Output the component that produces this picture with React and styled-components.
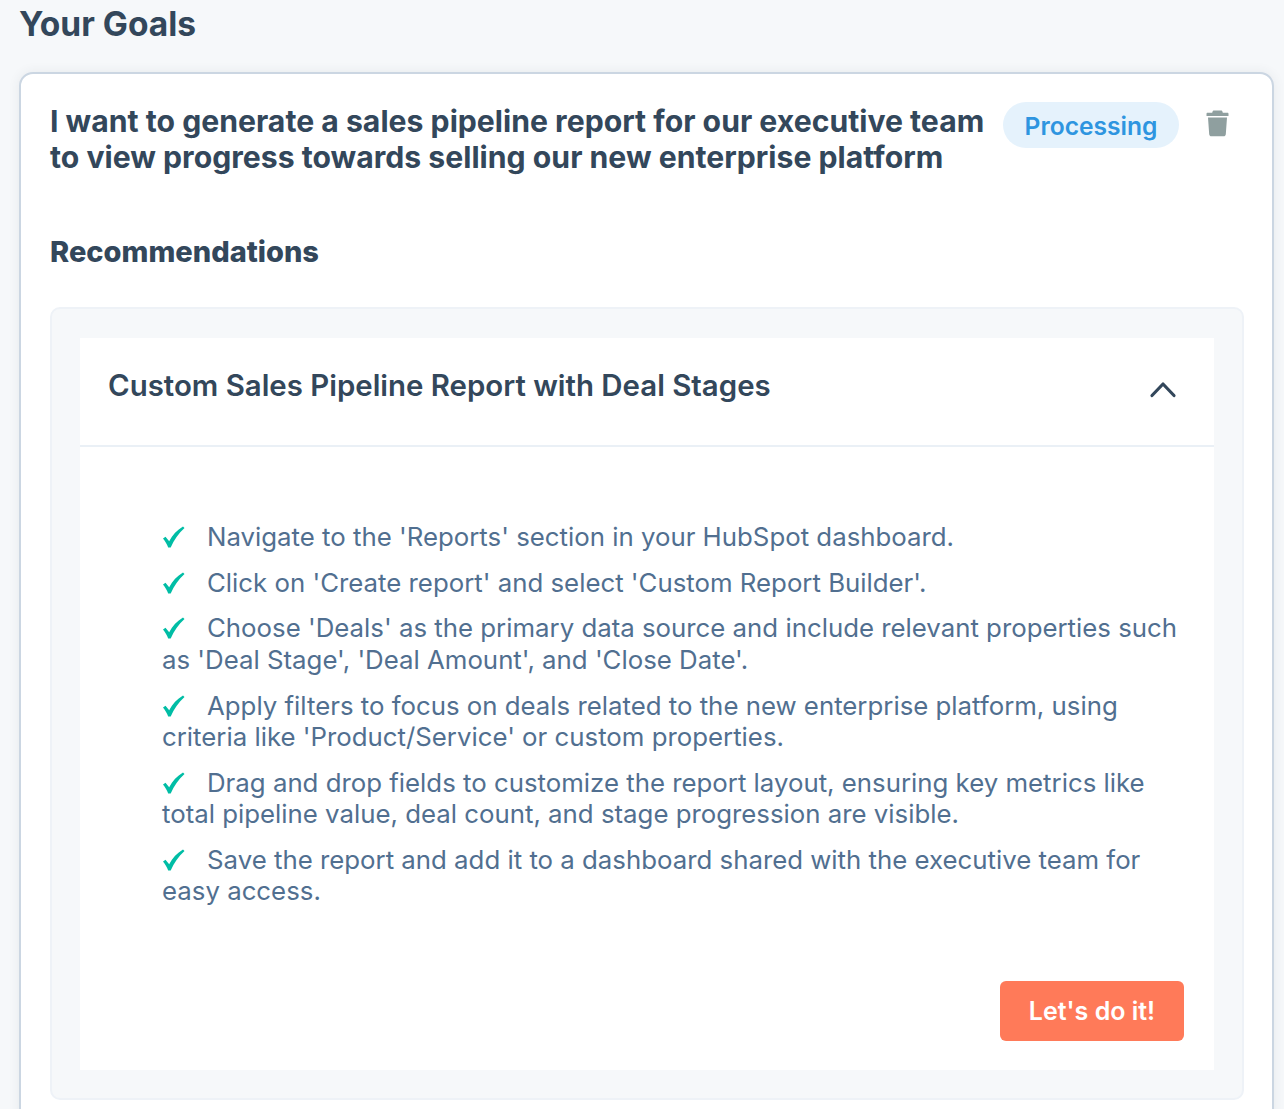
import React from 'react';
import styled, { createGlobalStyle } from 'styled-components';

const steps = [
  "Navigate to the 'Reports' section in your HubSpot dashboard.",
  "Click on 'Create report' and select 'Custom Report Builder'.",
  "Choose 'Deals' as the primary data source and include relevant properties such as 'Deal Stage', 'Deal Amount', and 'Close Date'.",
  "Apply filters to focus on deals related to the new enterprise platform, using criteria like 'Product/Service' or custom properties.",
  "Drag and drop fields to customize the report layout, ensuring key metrics like total pipeline value, deal count, and stage progression are visible.",
  "Save the report and add it to a dashboard shared with the executive team for easy access.",
];

const App = () => {
  return (
    <Page>
      <GlobalStyle />
      <Title>Your Goals</Title>
      <GoalCard>
        <GoalHeader>
          <GoalText>
            I want to generate a sales pipeline report for our executive team to view progress towards selling our new enterprise platform
          </GoalText>
          <Badge>Processing</Badge>
          <TrashButton aria-label="Delete goal">
            <svg width="23" height="28" viewBox="0 0 23 28">
              <path
                fill="#8f9f9f"
                d="M8 1.500h7c.8 0 1.300.5 1.500 1.200l.3 1h4.700c.6 0 1 .5 1 1V7H.5V4.700c0-.5.4-1 1-1h4.700l.3-1C6.700 2 7.200 1.500 8 1.500zM2 8.500h19l-1.200 16.700c-.1 1.200-1 2.100-2.200 2.100H5.400c-1.200 0-2.100-.9-2.200-2.100L2 8.500z"
              />
            </svg>
          </TrashButton>
        </GoalHeader>
        <SectionTitle>Recommendations</SectionTitle>
        <Panel>
          <Accordion>
            <AccordionHeader>
              <AccordionTitle>Custom Sales Pipeline Report with Deal Stages</AccordionTitle>
              <Chevron width="28" height="18" viewBox="0 0 28 18">
                <path d="M3 15.500L14 4l11 11.500" fill="none" stroke="#33475b" strokeWidth="3.200" strokeLinecap="round" strokeLinejoin="round" />
              </Chevron>
            </AccordionHeader>
            <AccordionBody>
              <StepList>
                {steps.map(step => (
                  <Step key={step}>
                    <Check width="23" height="24" viewBox="0 0 23 24">
                      <path fill="#00bda5" d="M1 13.500l2.500-1.800 3.700 4.500C10.500 10 15 5 21 1.500l1.500 1.500C16.500 8.500 12 15 8.700 22.500H6.200C5 19 3 16 1 13.500z" />
                    </Check>
                    {step}
                  </Step>
                ))}
              </StepList>
              <Actions>
                <PrimaryButton>Let's do it!</PrimaryButton>
              </Actions>
            </AccordionBody>
          </Accordion>
        </Panel>
      </GoalCard>
    </Page>
  );
};

export default App;

const GlobalStyle = createGlobalStyle`
  html, body {
    margin: 0;
    height: 1109px;
    overflow: hidden;
    background: #f6f8fa;
  }
  body {
    font-family: Inter, "Noto Sans", sans-serif;
  }
`;

const Page = styled.div`
  height: 1109px;
  overflow: hidden;
  box-sizing: border-box;
  padding: 0 10px 0 19px;
`;

const Title = styled.h1`
  margin: 0 0 30px;
  height: 42px;
  font-size: 33.500px;
  line-height: 48px;
  font-weight: 700;
  color: #33475b;
`;

const GoalCard = styled.section`
  box-sizing: border-box;
  background: #fff;
  border: 2px solid #cbd6e2;
  border-radius: 14px;
  padding: 28px 28px 40px 29px;
  box-shadow: 0 0 12px rgba(45, 62, 80, 0.08);
`;

const GoalHeader = styled.div`
  display: flex;
  align-items: flex-start;
`;

const GoalText = styled.div`
  width: 953px;
  padding-top: 1px;
  font-size: 30.200px;
  line-height: 36px;
  font-weight: 700;
  color: #33475b;
`;

const Badge = styled.span`
  box-sizing: border-box;
  width: 176px;
  height: 46px;
  border-radius: 23px;
  background: #e5f2fc;
  color: #2e95e0;
  font-size: 24.600px;
  font-weight: 600;
  line-height: 48px;
  text-align: center;
`;

const TrashButton = styled.button`
  margin: 7px 0 0 27px;
  padding: 0;
  border: 0;
  background: none;
  height: 28px;
`;

const SectionTitle = styled.h2`
  margin: 59px 0 37px;
  font-size: 29px;
  line-height: 36px;
  font-weight: 800;
  color: #33475b;
`;

const Panel = styled.div`
  box-sizing: border-box;
  width: 1194px;
  height: 793px;
  padding: 29px 28px 28px;
  background: #f6f8fa;
  border: 2px solid #eef2f7;
  border-radius: 10px;
`;

const Accordion = styled.div`
  width: 1134px;
  height: 732px;
  background: #fff;
`;

const AccordionHeader = styled.div`
  box-sizing: border-box;
  height: 109px;
  display: flex;
  align-items: center;
  justify-content: space-between;
  padding: 0 37px 0 28px;
  border-bottom: 2px solid #eaf0f6;
`;

const AccordionTitle = styled.div`
  font-size: 29.400px;
  line-height: 40px;
  font-weight: 600;
  color: #33475b;
  position: relative;
  top: -6px;
`;

const Chevron = styled.svg`
  margin-bottom: 5px;
`;

const AccordionBody = styled.div`
  padding: 74px 30px 0 82px;
`;

const StepList = styled.ul`
  list-style: none;
  margin: 0;
  padding: 0;
`;

const Step = styled.li`
  font-size: 25.800px;
  line-height: 31.500px;
  color: #516f90;
  margin-bottom: 14.200px;
`;

const Check = styled.svg`
  display: inline-block;
  vertical-align: -3px;
  margin-right: 22px;
`;

const Actions = styled.div`
  display: flex;
  justify-content: flex-end;
  margin: 74px 0 0;
`;

const PrimaryButton = styled.button`
  width: 184px;
  height: 60px;
  border: 0;
  border-radius: 6px;
  background: #ff7a59;
  color: #fff;
  font-family: inherit;
  font-size: 25px;
  font-weight: 600;
`;
